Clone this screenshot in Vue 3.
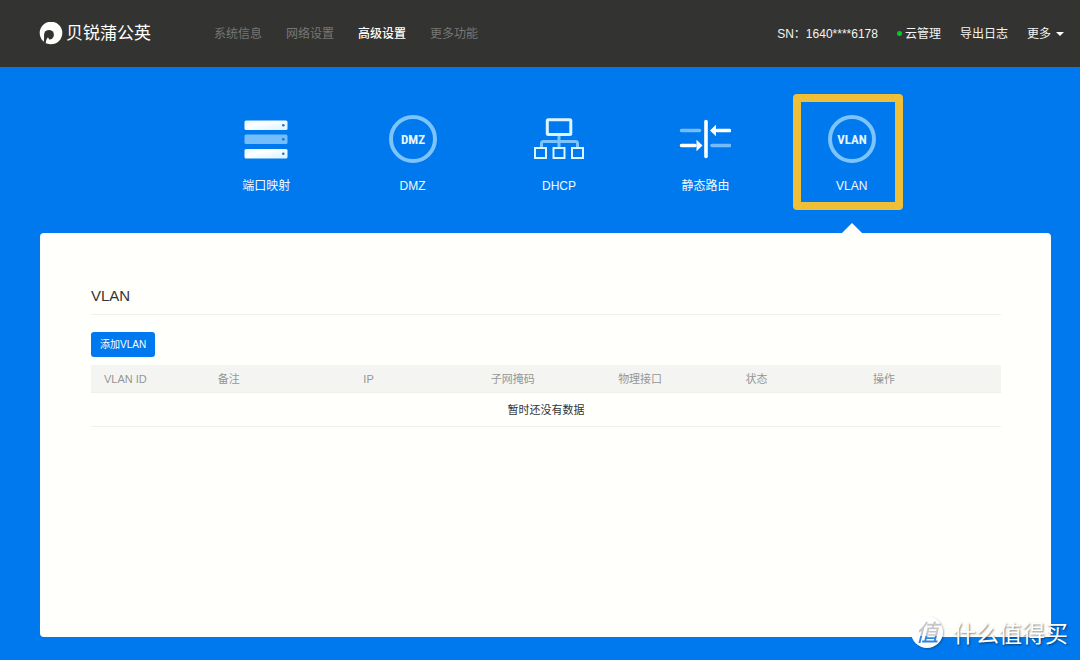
<script setup>
const nav = [
  { label: '系统信息', active: false },
  { label: '网络设置', active: false },
  { label: '高级设置', active: true },
  { label: '更多功能', active: false },
]
const columns = ['VLAN ID', '备注', 'IP', '子网掩码', '物理接口', '状态', '操作']
</script>

<template>
  <div class="page">
    <header class="topbar">
      <a class="brand" href="#">
        <svg width="24" height="24" viewBox="0 0 24 24" aria-hidden="true">
          <circle cx="12" cy="11" r="11.300" fill="#fffffc" />
          <circle cx="10" cy="12.800" r="4.900" fill="#333331" />
          <path d="M5.300 12 L4.800 20.500 L6.800 21.600 L8.500 16 Z" fill="#333331" />
          <path d="M6.800 21.500 C6.900 18.500 7.600 16.600 9 15.200 L10.800 18.500 Z" fill="#fffffc" />
        </svg>
        <span>贝锐蒲公英</span>
      </a>
      <nav class="menu">
        <a v-for="n in nav" :key="n.label" href="#" :class="{ active: n.active }">{{ n.label }}</a>
      </nav>
      <div class="tools">
        <span class="sn">SN：1640****6178</span>
        <a class="cloud" href="#">云管理</a>
        <a href="#">导出日志</a>
        <button type="button" class="more">更多</button>
      </div>
    </header>

    <nav class="tabs">
      <a href="#" class="tab">
        <svg width="52" height="52" viewBox="0 0 52 52" aria-hidden="true">
          <defs>
            <linearGradient id="slab" x1="0" y1="0" x2="1" y2="1">
              <stop offset="0" stop-color="#dff5ff" />
              <stop offset="0.35" stop-color="#fff" />
              <stop offset="1" stop-color="#d9f3ff" />
            </linearGradient>
          </defs>
          <rect x="4.500" y="7.500" width="43" height="9.500" rx="1.500" fill="url(#slab)" />
          <rect x="4.500" y="21.500" width="43" height="9.500" rx="1.500" fill="#74bdfa" />
          <rect x="4.500" y="36" width="43" height="9.500" rx="1.500" fill="url(#slab)" />
          <circle cx="43.300" cy="12.300" r="1.300" fill="#0878e8" />
          <circle cx="43.300" cy="26.300" r="1.300" fill="#0878e8" />
          <circle cx="43.300" cy="40.700" r="1.300" fill="#0878e8" />
        </svg>
        <span>端口映射</span>
      </a>
      <a href="#" class="tab">
        <svg width="52" height="52" viewBox="0 0 52 52" aria-hidden="true">
          <circle cx="26" cy="26" r="22" fill="none" stroke="#7cc4fb" stroke-width="4" />
          <text class="badge-text" x="26" y="31" text-anchor="middle">DMZ</text>
        </svg>
        <span>DMZ</span>
      </a>
      <a href="#" class="tab">
        <svg width="52" height="52" viewBox="0 0 52 52" fill="none" aria-hidden="true">
          <path d="M26 22 V37 M8.500 36 V30.500 Q8.500 28.500 10.500 28.500 H42.500 Q44.500 28.500 44.500 30.500 V36" stroke="#7cc4fb" stroke-width="3" />
          <rect x="14.300" y="6.800" width="23.500" height="14.700" rx="1" fill="#0079ee" stroke="#dcf4ff" stroke-width="3" />
          <g fill="#0079ee" stroke="#dcf4ff" stroke-width="2">
            <rect x="2" y="35" width="11" height="10" />
            <rect x="20.500" y="35" width="11" height="10" />
            <rect x="39" y="35" width="11" height="10" />
          </g>
        </svg>
        <span>DHCP</span>
      </a>
      <a href="#" class="tab">
        <svg width="52" height="52" viewBox="0 0 52 52" fill="none" stroke-linecap="round" stroke-width="3.600" aria-hidden="true">
          <path d="M2.500 17.500 H20.500 M33 32.500 H50.500" stroke="#74bdfa" />
          <path d="M27 8.500 V43.500" stroke="#fff" />
          <path d="M38 17.500 H50.500 M2.500 32.500 H16" stroke="#fff" />
          <path d="M31 17.500 L37 11.700 V23.300 Z M23.500 32.500 L17.500 26.700 V38.300 Z" fill="#fff" />
        </svg>
        <span>静态路由</span>
      </a>
      <a href="#" class="tab current" aria-current="page">
        <svg width="52" height="52" viewBox="0 0 52 52" aria-hidden="true">
          <circle cx="26" cy="26" r="22" fill="none" stroke="#7cc4fb" stroke-width="4" />
          <text class="badge-text" x="26" y="31" text-anchor="middle">VLAN</text>
        </svg>
        <span>VLAN</span>
      </a>
    </nav>

    <main class="panel">
      <h1>VLAN</h1>
      <button type="button" class="add">添加VLAN</button>
      <table>
        <colgroup>
          <col class="c-id" /><col class="c-note" /><col class="c-ip" /><col class="c" /><col class="c" /><col class="c" /><col />
        </colgroup>
        <thead>
          <tr><th v-for="c in columns" :key="c" scope="col">{{ c }}</th></tr>
        </thead>
        <tbody>
          <tr><td :colspan="columns.length">暂时还没有数据</td></tr>
        </tbody>
      </table>
    </main>

    <div class="watermark"><span class="seal"><span>值</span></span><span>什么值得买</span></div>
  </div>
</template>

<style>
body {
  background: #0079ee;
}
</style>

<style scoped>
.page {
  position: relative;
  box-sizing: border-box;
  display: flex;
  flex-direction: column;
  min-height: 100vh;
  padding-bottom: 23px;
  background: #0079ee;
  font: 12px/20px "Liberation Sans", "Noto Sans CJK SC", sans-serif;
  color: #333;
}
a {
  color: inherit;
  text-decoration: none;
}
button {
  font: inherit;
  border: 0;
  cursor: pointer;
}
.topbar {
  display: flex;
  align-items: center;
  height: 67px;
  padding: 0 16px 0 39px;
  background: #333331;
  color: #f4f4f2;
  white-space: nowrap;
}
.brand {
  display: flex;
  align-items: center;
  gap: 3px;
  color: #fffffc;
  font-size: 17px;
}
.menu {
  display: flex;
  gap: 24px;
  margin-left: 63px;
  color: #777775;
}
.menu .active {
  color: #fffffc;
  font-weight: 500;
}
.tools {
  display: flex;
  align-items: center;
  gap: 19px;
  margin-left: auto;
}
.cloud,
.more {
  display: flex;
  align-items: center;
}
.cloud::before {
  content: "";
  width: 5px;
  height: 5px;
  margin-right: 3px;
  border-radius: 50%;
  background: #0c2;
}
.more {
  gap: 5px;
  padding: 0;
  background: none;
  color: inherit;
}
.more::after {
  content: "";
  border: 4px solid transparent;
  border-top-color: #fffffc;
  border-bottom: 0;
}
.tabs {
  display: grid;
  grid-template-columns: repeat(5, 1fr);
  padding: 0 155px 0 193px;
  color: #f4faff;
}
.tab {
  position: relative;
  display: flex;
  flex-direction: column;
  align-items: center;
  gap: 11px;
  padding: 46px 0 37px;
}
.badge-text {
  font: bold 13px "Liberation Sans Narrow", "Roboto Condensed", "Open Sans Condensed", sans-serif;
  fill: #e6f6ff;
}
.current::before {
  content: "";
  position: absolute;
  top: 27px;
  left: 14px;
  width: 94px;
  height: 100px;
  border: 8px solid #f0bf38;
  border-radius: 4px;
}
.current::after {
  content: "";
  position: absolute;
  bottom: 0;
  border: 10px solid transparent;
  border-top: 0;
  border-bottom-color: #fffffc;
}
.panel {
  flex: 1;
  margin: 0 29px 0 40px;
  padding: 51px 50px 40px 51px;
  border-radius: 4px;
  background: #fffffc;
}
h1 {
  margin: 0 0 17px;
  padding-bottom: 6px;
  border-bottom: 1px solid #eeefec;
  font-size: 15px;
  line-height: 24px;
  font-weight: 400;
}
.add {
  display: block;
  height: 25px;
  margin-bottom: 8px;
  padding: 0 9px;
  border-radius: 3px;
  background: #0079ee;
  color: #fffffc;
  font-size: 10px;
}
table {
  width: 100%;
  table-layout: fixed;
  border-collapse: collapse;
  font-size: 11px;
}
.c-id {
  width: 12.5%;
}
.c-note {
  width: 16%;
}
.c-ip,
.c {
  width: 14%;
}
th {
  height: 27px;
  padding: 0 13px;
  background: #f4f5f2;
  border-bottom: 1px solid #eeefec;
  color: #969694;
  font-weight: 400;
  text-align: left;
}
td {
  height: 33px;
  padding: 0;
  border-bottom: 1px solid #eeefec;
  text-align: center;
}
.watermark {
  position: absolute;
  right: 12px;
  bottom: 12px;
  display: flex;
  align-items: center;
  gap: 10px;
  color: #fff;
  font: 23px/30px "Noto Sans CJK SC", sans-serif;
  text-shadow: 1px 1px 2px rgba(0, 0, 0, 0.5);
}
.seal {
  width: 32px;
  height: 32px;
  border-radius: 50%;
  background: #fff;
  box-shadow: 1px 1px 2px rgba(0, 0, 0, 0.3);
  text-align: center;
  text-shadow: none;
}
.seal span {
  display: block;
  background: linear-gradient(#c4c6c8 20px, #2f85dc 20px);
  background-clip: text;
  color: transparent;
  font-style: italic;
  font-weight: 500;
}
</style>
